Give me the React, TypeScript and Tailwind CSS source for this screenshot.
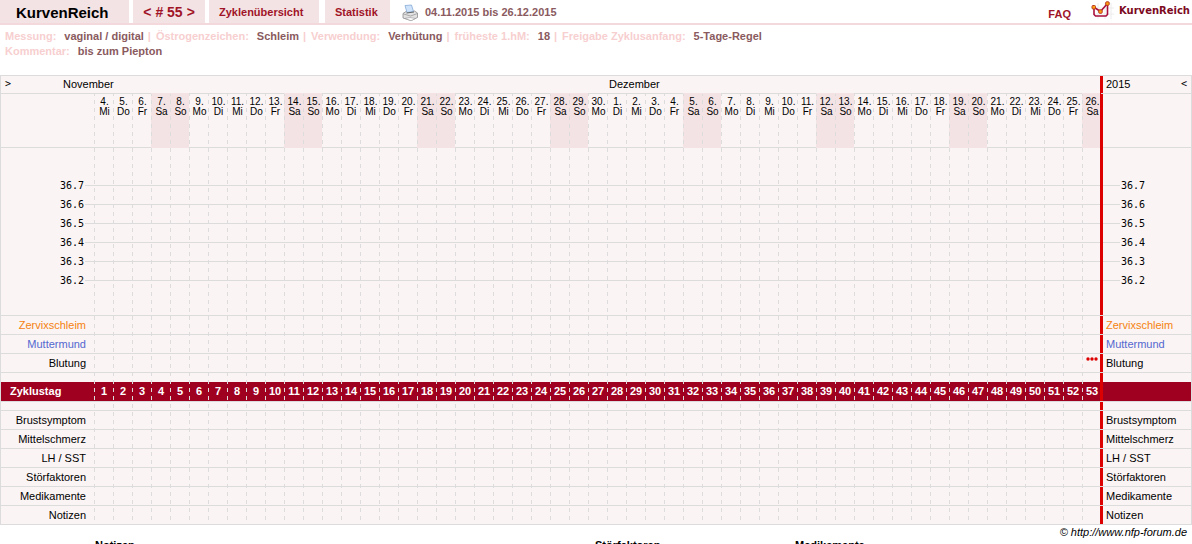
import { clsx } from 'clsx';

const weekdays = ['Mi', 'Do', 'Fr', 'Sa', 'So', 'Mo', 'Di'];

const days = Array.from({ length: 53 }, (_, i) => {
  const date = i < 27 ? i + 4 : i - 26;
  const weekday = weekdays[i % 7];
  return { cycleDay: i + 1, date, weekday, weekend: weekday === 'Sa' || weekday === 'So' };
});

const temperatures = ['36.7', '36.6', '36.5', '36.4', '36.3', '36.2'];

const upperRows = [
  { label: 'Zervixschleim', color: 'text-[#f58210]' },
  { label: 'Muttermund', color: 'text-[#5468d0]' },
  { label: 'Blutung', color: 'text-black' },
];

const lowerRows = ['Brustsymptom', 'Mittelschmerz', 'LH / SST', 'Störfaktoren', 'Medikamente', 'Notizen'].map(
  (label) => ({ label, color: 'text-black' })
);

const settings = [
  { label: 'Messung:', value: 'vaginal / digital' },
  { label: 'Östrogenzeichen:', value: 'Schleim' },
  { label: 'Verwendung:', value: 'Verhütung' },
  { label: 'früheste 1.hM:', value: '18' },
  { label: 'Freigabe Zyklusanfang:', value: '5-Tage-Regel' },
];

// thick red marker between the last day and the right-hand labels
const marker = "relative before:absolute before:top-0 before:-left-px before:w-[3px] before:bg-[#dc0000] before:content-['']";

const PrinterIcon = () => (
  <svg viewBox="0 0 16 18" className="h-[18px] w-4" aria-hidden="true">
    <path d="M1 9.500 L4 7.500 L12.500 7 L15.500 9 L15.500 13.500 L9 16.500 L1 14 Z" fill="#e2e2e2" stroke="#8c8c8c" strokeWidth="0.8" />
    <path d="M3 1.500 L9.500 1 L11.500 7.500 L5 8.500 Z" fill="#cfe4fb" stroke="#86a9d4" strokeWidth="0.8" />
    <path d="M4.500 9 L12 8" stroke="#666" strokeWidth="1" />
    <path d="M1 9.800 L8.500 12 L15.500 9.500" fill="none" stroke="#999" strokeWidth="0.8" />
    <path d="M3 14.300 L9 16.800 L13.500 14.500 L8 13.500 Z" fill="#fafafa" stroke="#999" strokeWidth="0.6" />
  </svg>
);

const CurveIcon = () => (
  <svg viewBox="0 0 24 20" className="h-5 w-6" aria-hidden="true">
    <path d="M7 3V19M14 3V19M20 3V19M4 8H23M4 14H23" stroke="#ececec" strokeWidth="1" />
    <path d="M3 8V14.500L4.500 16H15L16.500 14.500V5" fill="none" stroke="#a80f3c" strokeWidth="1.600" />
    <path d="M2.500 7L9.500 11.500L16.500 3.500" fill="none" stroke="#a80f3c" strokeWidth="1.600" />
    <g fill="#ffa010" stroke="#b83a20" strokeWidth="1">
      <rect x="1" y="5.500" width="3.500" height="3.500" rx="1" />
      <rect x="7.700" y="9.800" width="3.500" height="3.500" rx="1" />
      <rect x="14.700" y="1.800" width="3.500" height="3.500" rx="1" />
    </g>
  </svg>
);

const Dots = () => (
  <svg viewBox="0 0 12 4" className="mx-auto mb-2 h-1 w-3" aria-label="Blutung">
    <g fill="#dc0000">
      <circle cx="2" cy="2" r="1.700" />
      <circle cx="6" cy="2" r="1.700" />
      <circle cx="10" cy="2" r="1.700" />
    </g>
  </svg>
);

const LabelRow = ({ label, color }: { label: string; color: string }) => (
  <tr className="h-[19px]">
    <th scope="row" className={clsx('border-b border-[#dcdcdc] pr-2 text-right font-normal', color)}>
      {label}
    </th>
    {days.map((day) => (
      <td key={day.cycleDay} className="border-b border-[#dcdcdc]">
        {label === 'Blutung' && day.cycleDay === 53 && <Dots />}
      </td>
    ))}
    <td className={clsx('border-b border-[#dcdcdc] pl-[5px] before:bottom-0', marker, color)}>{label}</td>
  </tr>
);

const Header = () => (
  <header className="flex h-[25px] border-b-2 border-[#f3d9db] font-bold text-[#a01428]">
    <h1 className="mr-1 w-[129px] bg-[#f4e3e4] pl-4 text-[15px] leading-[26px] text-black">KurvenReich</h1>
    <nav className="flex leading-[25px]">
      <div className="mr-1 flex w-[72px] justify-center gap-1 bg-[#f4e3e4] text-[14px]">
        <a href="#prev">&lt;</a>
        <span># 55</span>
        <a href="#next">&gt;</a>
      </div>
      <a href="#cycles" className="mr-1.5 w-[110px] bg-[#f4e3e4] pl-2.5">Zyklenübersicht</a>
      <a href="#stats" className="w-[65px] bg-[#f4e3e4] pl-2.5">Statistik</a>
    </nav>
    <button type="button" aria-label="Drucken" className="ml-3 pt-0.5">
      <PrinterIcon />
    </button>
    <span className="ml-[7px] leading-[25px] text-[#8a5a5e]">04.11.2015 bis 26.12.2015</span>
    <a href="#faq" className="ml-auto leading-[28px]">FAQ</a>
    <a href="#home" className="ml-5 flex gap-1 pr-0.5 font-['DejaVu_Sans'] text-[10px] leading-[22px] text-[#7c0a1e]">
      <CurveIcon />
      KurvenReich
    </a>
  </header>
);

const Settings = () => (
  <section className="h-[50px] pt-1 pl-[5px] leading-[15px] font-bold text-[#8a5a5e]">
    <p className="flex">
      {settings.map((item, i) => (
        <span key={item.label} className="flex">
          {i > 0 && <span className="mr-[5px] ml-1 text-[#f7cfd0]">|</span>}
          <span className="mr-2 text-[#f7cfd0]">{item.label}</span>
          {item.value}
        </span>
      ))}
    </p>
    <p className="flex">
      <span className="mr-2 text-[#f7cfd0]">Kommentar:</span>
      bis zum Piepton
    </p>
  </section>
);

const Chart = () => (
  <div className="relative border-x border-t border-[#dcdcdc] bg-[#faf4f4]">
    <table cellPadding={0} className="w-full table-fixed border-separate border-spacing-0 leading-[15px]">
      <colgroup>
        <col className="w-[93px]" />
        {days.map((day) => (
          <col key={day.cycleDay} />
        ))}
        <col className="w-[90px]" />
      </colgroup>
      <thead>
        <tr className="h-[17px]">
          <td colSpan={28}>
            <div className="flex items-start pl-1">
              <button type="button" className="w-[58px] text-left font-['DejaVu_Sans_Mono'] text-[10px] leading-[13px]">&gt;</button>
              November
            </div>
          </td>
          <td colSpan={26}>
            <span className="ml-0.5">Dezember</span>
          </td>
          <td className={clsx('before:-bottom-px', marker)}>
            <div className="flex items-start justify-between pr-1 pl-[5px]">
              2015
              <button type="button" className="font-['DejaVu_Sans_Mono'] text-[10px] leading-[13px]">&lt;</button>
            </div>
          </td>
        </tr>
        <tr className="h-[55px]">
          <td className="border-y border-[#dcdcdc]" />
          {days.map((day) => (
            <th
              key={day.cycleDay}
              scope="col"
              className={clsx(
                'border-y text-center align-top text-[10px] leading-[10px] font-normal',
                day.weekend ? 'border-[#f4e3e4] bg-[#f4e3e4]' : 'border-[#dcdcdc]'
              )}
            >
              <div className="pt-[3px] pl-0.5">
                {day.date}.<br />
                {day.weekday}
              </div>
            </th>
          ))}
          <td className={clsx('border-y border-[#dcdcdc] before:-bottom-px', marker)} />
        </tr>
      </thead>
      <tbody>
        <tr>
          <td
            colSpan={55}
            className="relative border-b border-[#dcdcdc] before:absolute before:inset-y-0 before:right-[88px] before:w-[3px] before:bg-[#dc0000] before:content-['']"
          >
            <div className="pt-7 pb-[25px] font-['DejaVu_Sans_Mono'] text-[10px] leading-[19px]">
              {temperatures.map((value) => (
                <div key={value} className="flex items-center">
                  <span className="w-[84px] pr-px text-right">{value}</span>
                  <span className="h-px flex-1 bg-[#dcdcdc]" />
                  <span className="w-[71px] pl-px">{value}</span>
                </div>
              ))}
            </div>
          </td>
        </tr>
        {upperRows.map((row) => (
          <LabelRow key={row.label} {...row} />
        ))}
        <tr className="h-[9px]">
          <td colSpan={54} />
          <td className={clsx('before:bottom-0', marker)} />
        </tr>
        <tr className="h-5 bg-[#a00020] font-bold text-white">
          <th scope="row" className="border-b border-[#dcdcdc] pl-[9px] text-left">
            Zyklustag
          </th>
          {days.map((day) => (
            <td key={day.cycleDay} className="border-b border-[#dcdcdc] pl-px text-center">
              {day.cycleDay}
            </td>
          ))}
          <td className={clsx('border-b border-[#dcdcdc] before:bottom-0', marker)} />
        </tr>
        <tr className="h-[9px]">
          <td colSpan={54} className="border-b border-[#dcdcdc]" />
          <td className={clsx('border-b border-[#dcdcdc] before:bottom-0', marker)} />
        </tr>
        {lowerRows.map((row) => (
          <LabelRow key={row.label} {...row} />
        ))}
      </tbody>
    </table>

    {/* Dashed day separators */}
    <div className="pointer-events-none absolute top-[18px] right-[90px] bottom-0 left-[93px] grid grid-cols-[repeat(53,minmax(0,1fr))]">
      {days.map((day) => (
        <span
          key={day.cycleDay}
          className="bg-[linear-gradient(#dcdcdc_2px,transparent_2px,transparent_6px,#dcdcdc_6px)] bg-[length:1px_8px] bg-repeat-y"
        />
      ))}
    </div>
  </div>
);

export default function App() {
  return (
    <div className="h-screen overflow-hidden bg-white font-['Liberation_Sans',Arial,sans-serif] text-[11px] text-black">
      <Header />
      <Settings />
      <Chart />
      <footer>
        <p className="pr-[5px] text-right leading-[14px] italic">© http://www.nfp-forum.de</p>
        <div className="flex pl-[95px] leading-[12px] font-bold">
          <h2 className="w-[500px]">Notizen</h2>
          <h2 className="w-[200px]">Störfaktoren</h2>
          <h2>Medikamente</h2>
        </div>
      </footer>
    </div>
  );
}
